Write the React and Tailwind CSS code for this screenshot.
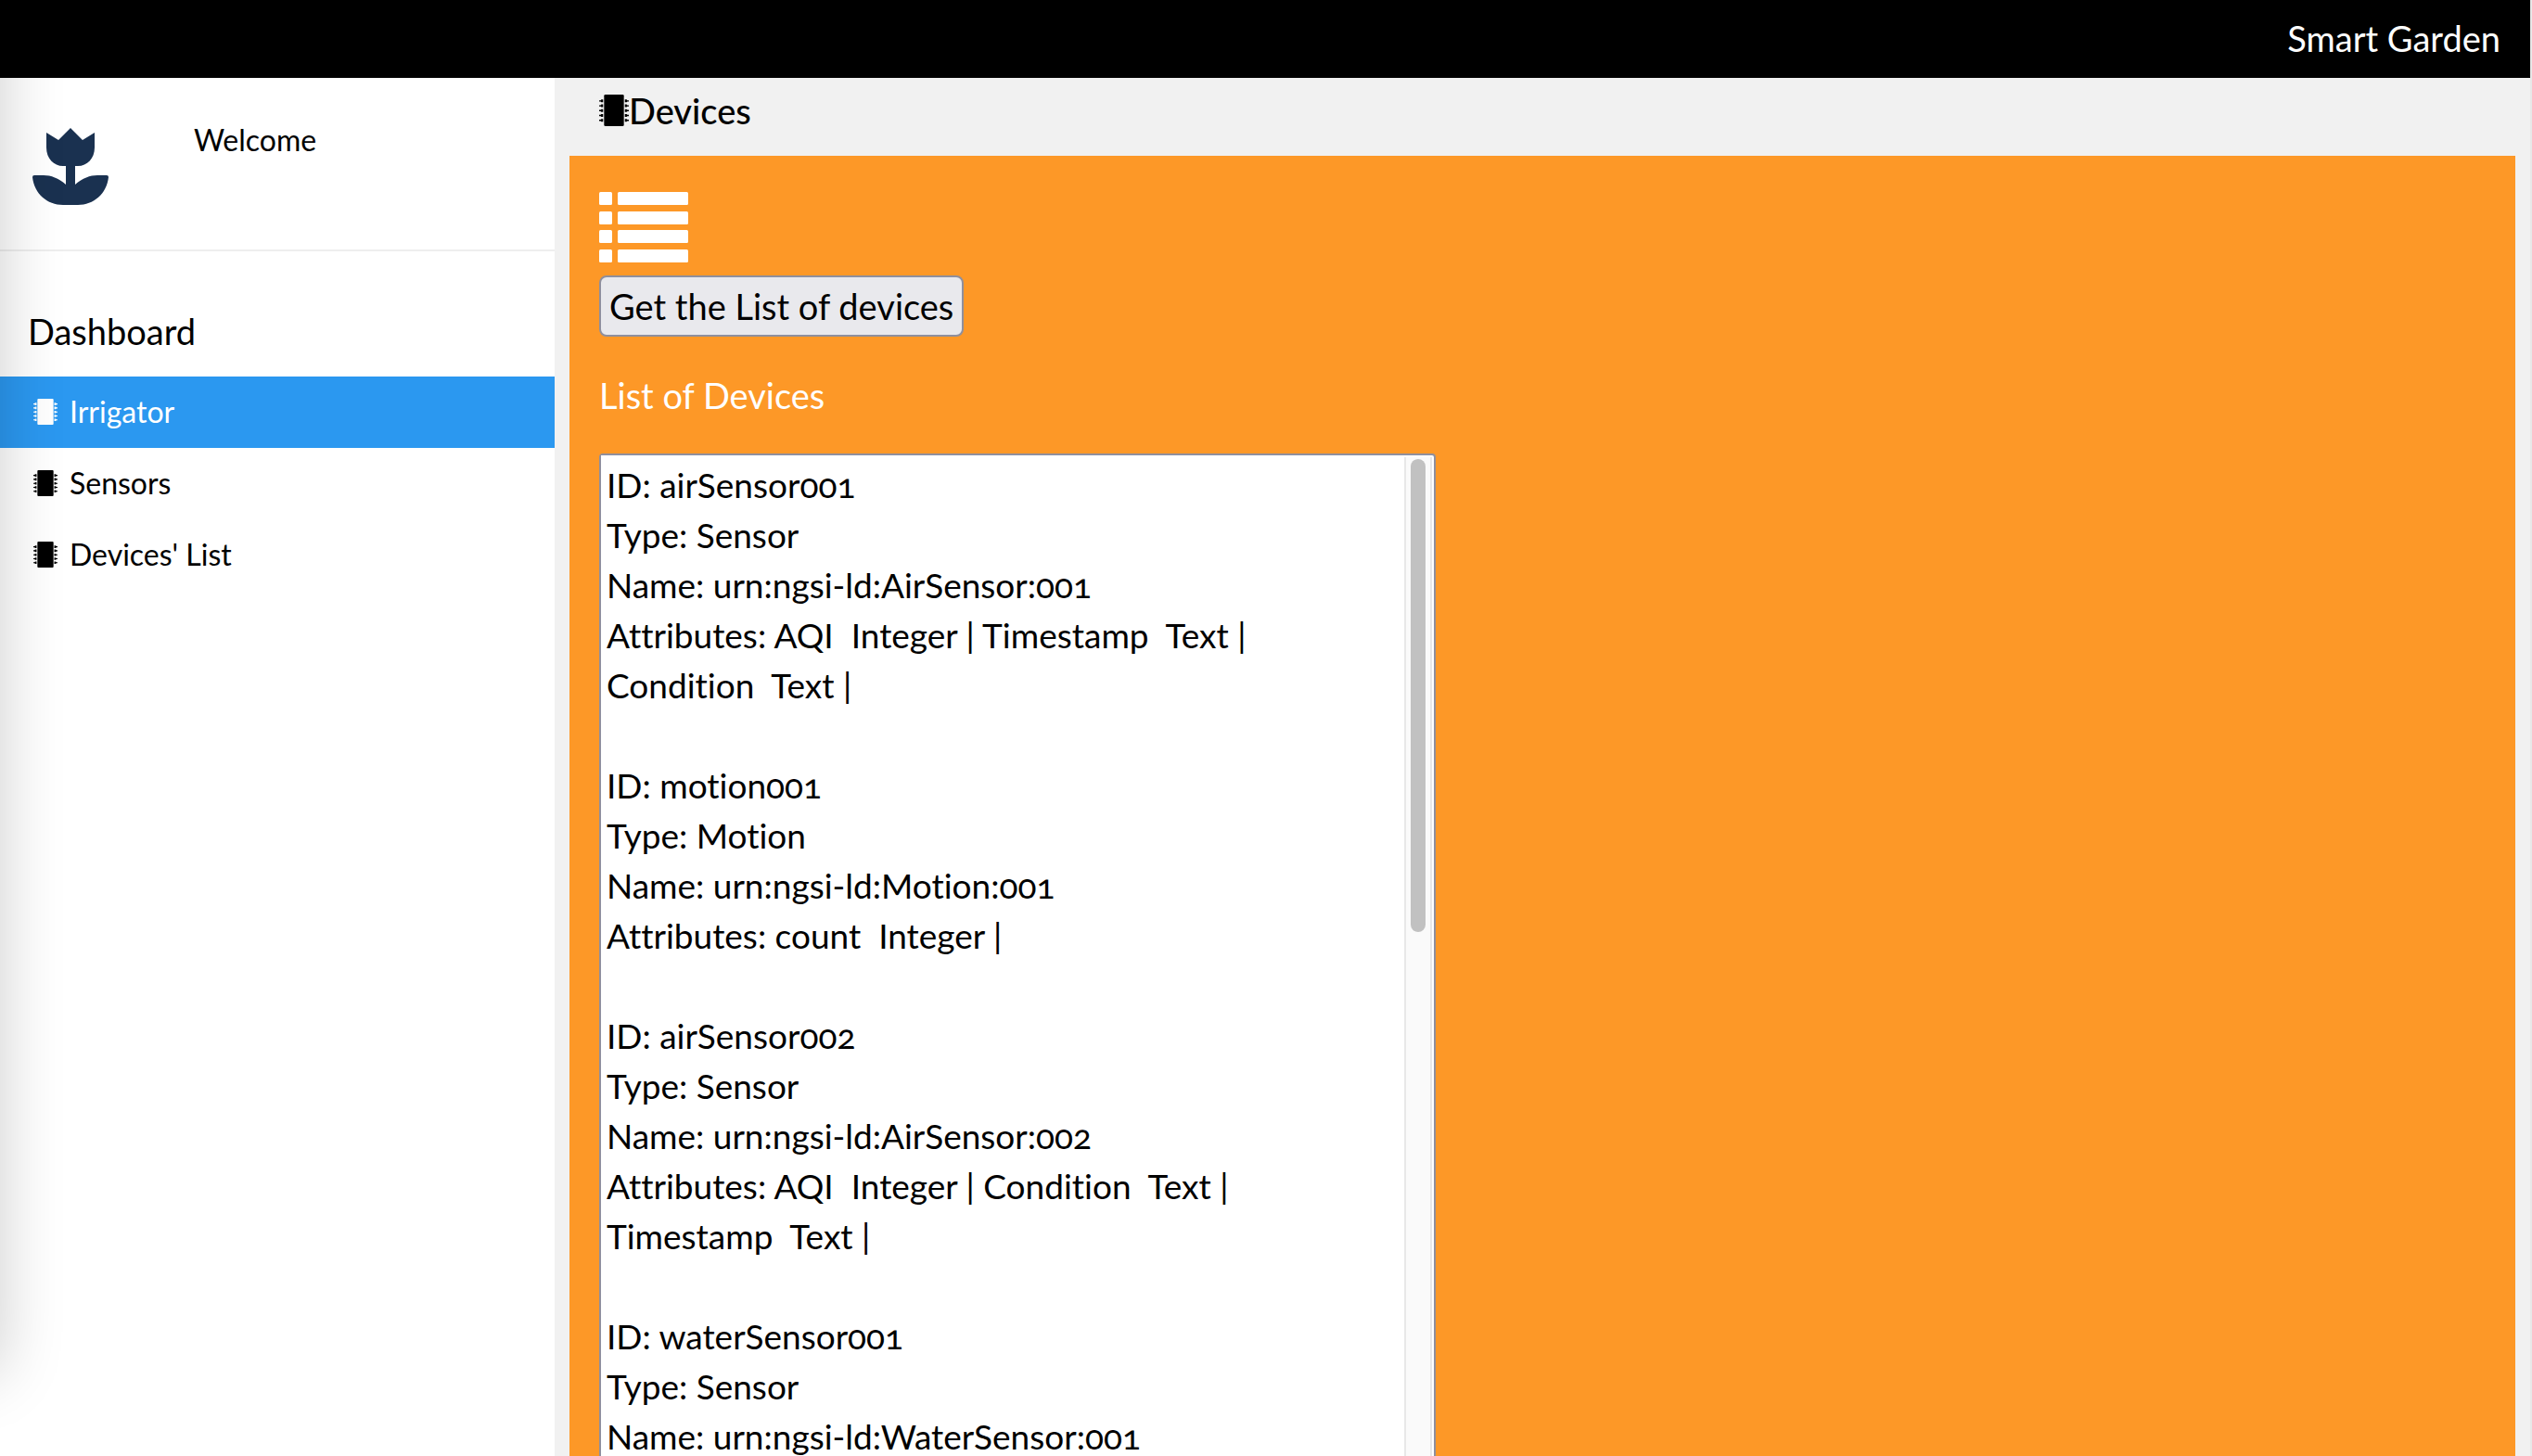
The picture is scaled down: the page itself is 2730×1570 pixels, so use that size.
import React from "react";

const DEVICES = `ID: airSensor001
Type: Sensor
Name: urn:ngsi-ld:AirSensor:001
Attributes: AQI  Integer | Timestamp  Text |
Condition  Text |

ID: motion001
Type: Motion
Name: urn:ngsi-ld:Motion:001
Attributes: count  Integer |

ID: airSensor002
Type: Sensor
Name: urn:ngsi-ld:AirSensor:002
Attributes: AQI  Integer | Condition  Text |
Timestamp  Text |

ID: waterSensor001
Type: Sensor
Name: urn:ngsi-ld:WaterSensor:001`;

const LINKS = [
  { label: "Irrigator", active: true },
  { label: "Sensors", active: false },
  { label: "Devices' List", active: false },
];

const PINS = [4, 8, 12, 16, 20];

function Chip({ className }) {
  return (
    <svg viewBox="0 0 24 26" preserveAspectRatio="none" className={className} fill="currentColor" aria-hidden="true">
      <rect x="4" y="0" width="16" height="26" rx="1" />
      {PINS.map((y) => (
        <g key={y}>
          <path d={`M0 ${y + 0.7}h1.2l.6-.7h1.4v2.4h-1.4l-.6-.7h-1.2z`} />
          <path d={`M24 ${y + 0.7}h-1.2l-.6-.7h-1.4v2.4h1.4l.6-.7h1.2z`} />
        </g>
      ))}
    </svg>
  );
}

function Flower() {
  return (
    <svg viewBox="0 0 82 83" className="h-[83px] w-[82px] text-[#1a3150]" fill="currentColor" aria-label="Tulip" role="img">
      <path d="M15 5L28 13L41 0L54 13L67 5V21C67 33 59 41 49 41H46V61C54 54 62 51 70 51H80Q82 51 82 53C80 71 66 83 49 83H33C16 83 2 71 0 53Q0 51 2 51H12C20 51 28 54 36 61V41H33C23 41 15 33 15 21Z" />
    </svg>
  );
}

function ListIcon() {
  return (
    <svg viewBox="0 0 96 76" className="h-[76px] w-24 text-white" fill="currentColor" aria-hidden="true">
      {[0, 21, 41, 62].map((y) => (
        <g key={y}>
          <rect x="0" y={y} width="14" height="14" rx="1.5" />
          <rect x="20" y={y} width="76" height="14" rx="1.5" />
        </g>
      ))}
    </svg>
  );
}

function Sidebar() {
  return (
    <aside className="relative w-[598px] shrink-0 overflow-hidden bg-white">
      <div className="flex h-[187px] items-start border-b-2 border-[#eeeeee] pl-[35px] pt-[54px]">
        <Flower />
        <span className="ml-[92px] text-[32px] leading-[26px]">Welcome</span>
      </div>
      <h2 className="pl-[30px] pt-[59px] text-[38px] leading-[54px]">Dashboard</h2>
      <nav className="pt-[22px]">
        {LINKS.map((link) => (
          <a
            key={link.label}
            href="#"
            className={
              link.active
                ? "flex h-[77px] items-center bg-[#2b98f0] pb-[2px] pl-9 text-[32px] text-white"
                : "flex h-[77px] items-center pb-[2px] pl-9 text-[32px]"
            }
          >
            <Chip className="mr-[13px] h-7 w-[26px]" />
            {link.label}
          </a>
        ))}
      </nav>
      <div className="pointer-events-none absolute -left-40 -top-20 h-[1476px] w-40 shadow-[0_0_70px_rgba(0,0,0,0.2)]" />
    </aside>
  );
}

function DeviceList() {
  return (
    <div className="flex h-[1120px] w-[902px] rounded-t-[4px] border-2 border-[#8f8f9d] bg-white">
      <textarea
        id="devices"
        readOnly
        value={DEVICES}
        className="min-w-0 flex-1 resize-none overflow-hidden bg-white py-[5px] pl-[6px] text-[37px] leading-[54px] oldstyle-nums outline-none"
      />
      <div className="mr-[2px] mt-[2px] flex w-[30px] justify-center border-x-2 border-[#e8e8e8] bg-[#fafafa] pt-[2px]">
        <div className="h-[510px] w-4 rounded-full bg-[#c1c1c1]" />
      </div>
    </div>
  );
}

export default function App() {
  return (
    <div className="flex h-screen overflow-hidden bg-[#e8e8e8] pr-[2px] font-['Lato','Open_Sans',sans-serif] text-black [font-variant-ligatures:no-common-ligatures]">
      <div className="flex min-w-0 flex-1 flex-col bg-[#f1f1f1]">
        <header className="flex h-[84px] shrink-0 items-center justify-end bg-black pb-[2px] pr-8 text-[38px] text-white">
          Smart Garden
        </header>
        <div className="flex min-h-0 flex-1">
          <Sidebar />
          <main className="flex min-w-0 flex-1 flex-col px-4">
            <h1 className="flex h-[84px] shrink-0 items-start pl-8 pt-2 text-[38px] font-medium leading-[54px]">
              <Chip className="mt-[10px] h-[34px] w-8" />
              Devices
            </h1>
            <section className="min-h-0 flex-1 bg-[#fd9827] px-8 pt-[39px]">
              <ListIcon />
              <button
                type="button"
                className="mt-[14px] block h-[66px] rounded-lg border-2 border-[#8f8f9d] bg-[#e9e9ed] px-[9px] text-[38px] leading-[54px]"
              >
                Get the List of devices
              </button>
              <label htmlFor="devices" className="mb-9 mt-9 block text-[38px] leading-[54px] text-white">
                List of Devices
              </label>
              <DeviceList />
            </section>
          </main>
        </div>
      </div>
    </div>
  );
}
